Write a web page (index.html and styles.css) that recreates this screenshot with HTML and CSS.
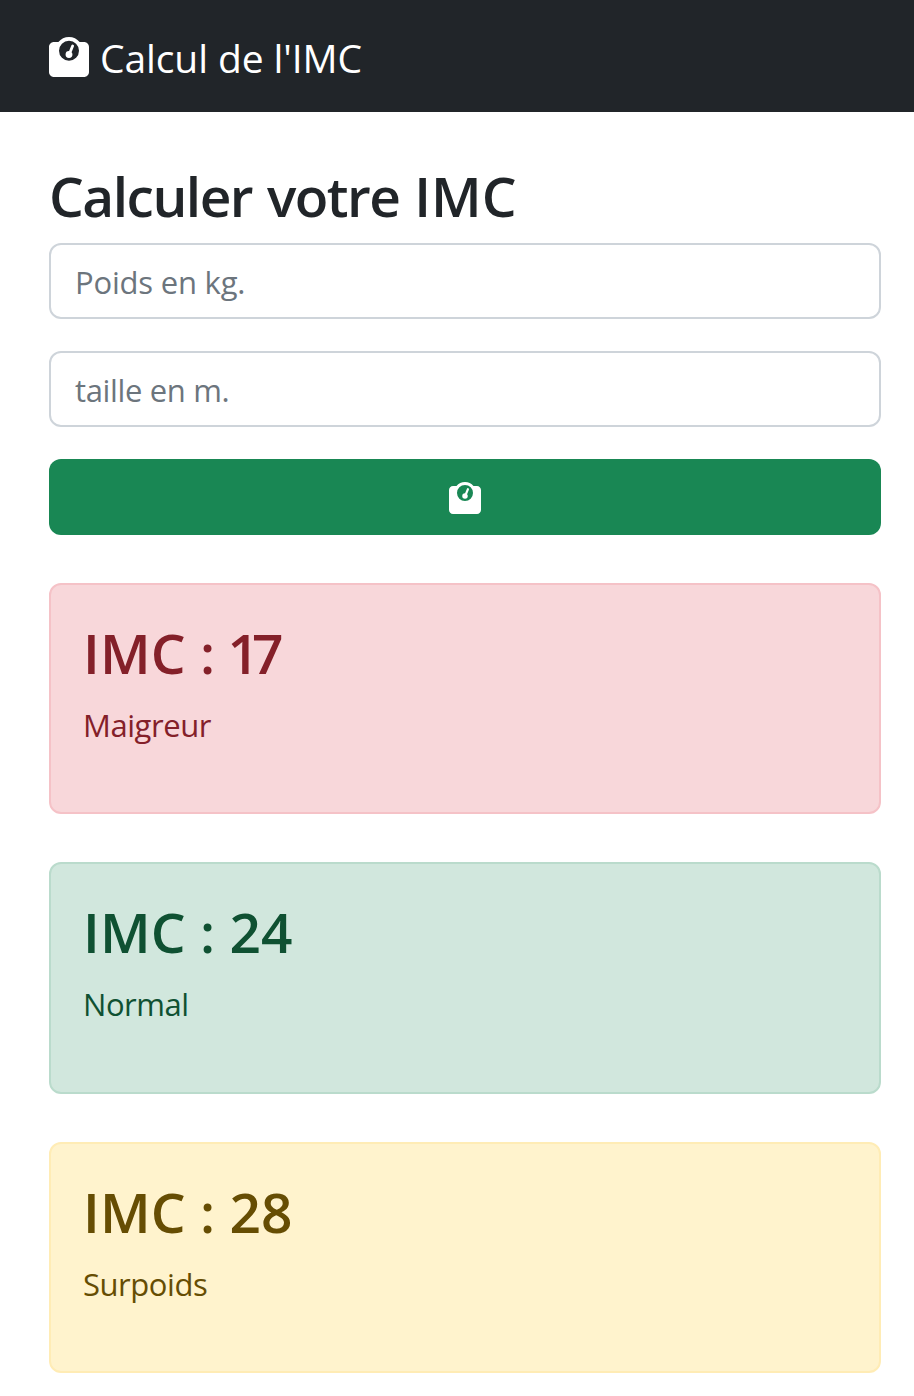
FILE: index.html
```html
<!DOCTYPE html>
<html lang="fr">
<head>
<meta charset="utf-8">
<title>Calcul de l'IMC</title>
<link rel="stylesheet" href="styles.css">
</head>
<body>
<svg class="sprite" aria-hidden="true">
  <symbol id="scale" viewBox="0 0 512 512">
    <path fill="currentColor" fill-rule="evenodd" d="M391.800 64C359.500 24.900 310.700 0 256 0S152.500 24.900 120.200 64H64C28.700 64 0 92.700 0 128V448c0 35.300 28.700 64 64 64H448c35.300 0 64-28.700 64-64V128c0-35.300-28.700-64-64-64ZM128 176a128 128 0 1 1 256 0a128 128 0 1 1-256 0Z"/>
    <path fill="currentColor" d="M300 224a44 44 0 1 1-43-44l30-74a18 18 0 0 1 33 13l-31 76A44 44 0 0 1 300 224Z"/>
  </symbol>
</svg>
<header class="navbar">
  <svg class="brand-icon"><use href="#scale"/></svg>
  <span class="brand-text">Calcul de l'IMC</span>
</header>
<main class="container">
  <h1 class="title">Calculer votre <span class="title-acronym">IMC</span></h1>
  <form class="form">
    <input class="field field-weight" type="text" placeholder="Poids en kg.">
    <input class="field field-height" type="text" placeholder="taille en m.">
    <button class="submit" type="button" aria-label="Calculer"><svg class="submit-icon"><use href="#scale"/></svg></button>
  </form>
  <section class="results">
    <article class="alert danger">
      <h2 class="alert-title">IMC :<span class="kern-space"> </span><span class="kern-one">1</span>7</h2>
      <p class="alert-text">Maigreur</p>
    </article>
    <article class="alert success">
      <h2 class="alert-title">IMC : 24</h2>
      <p class="alert-text">Normal</p>
    </article>
    <article class="alert warning">
      <h2 class="alert-title">IMC : 28</h2>
      <p class="alert-text">Surpoids</p>
    </article>
  </section>
</main>
</body>
</html>
```

FILE: styles.css
```css
* { box-sizing: border-box; }
html { overflow: hidden; }
body {
  margin: 0;
  background: #fff;
  color: #212529;
  font: 400 31px/48px "Segoe UI", "Open Sans", sans-serif;
}
.sprite { display: none; }
.navbar {
  height: 112px;
  padding: 0 49px;
  display: flex;
  align-items: center;
  background: #212529;
  color: #fff;
}
.brand-icon { width: 40px; height: 40px; margin: 2px 11px 0 0; }
.brand-text {
  font-size: 39px;
  line-height: 60px;
  letter-spacing: -0.1px;
  padding-top: 3px;
}
.container { padding: 48px 33px 0 49px; }
.title, .alert-title {
  margin: 0;
  font-size: 55px;
  line-height: 67px;
  font-weight: 600;
}
.title {
  padding-top: 2px;
  height: 83px;
  letter-spacing: -1.5px;
  word-spacing: 2px;
}
.title-acronym { letter-spacing: 0; }
.form { display: flex; flex-direction: column; gap: 32px; }
.field {
  width: 100%;
  height: 76px;
  padding: 1px 24px 0;
  border: 2px solid #ced4da;
  border-radius: 12px;
  background: #fff;
  font: inherit;
  color: #212529;
}
.field-weight { letter-spacing: -0.2px; }
.field-height { letter-spacing: -0.35px; }
.field::placeholder { color: #6c757d; opacity: 1; }
.submit {
  height: 76px;
  padding: 2px 0 0;
  border: 0;
  border-radius: 12px;
  background: #198754;
  color: #fff;
  display: flex;
  align-items: center;
  justify-content: center;
}
.submit-icon { width: 32px; height: 32px; }
.results { display: flex; flex-direction: column; gap: 48px; padding-top: 48px; }
.alert {
  height: 231.4px;
  padding: 34px 32px;
  border: 2px solid;
  border-radius: 12px;
}
.alert-title { letter-spacing: 0.1px; }
.kern-space { letter-spacing: -2px; }
.kern-one { letter-spacing: -7px; }
.alert-text { margin: 15px 0 0; letter-spacing: -0.45px; }
.danger { color: #842029; background: #f8d7da; border-color: #f5c2c7; }
.success { color: #0f5132; background: #d1e7dd; border-color: #badbcc; }
.warning { color: #664d03; background: #fff3cd; border-color: #ffecb5; }
```
